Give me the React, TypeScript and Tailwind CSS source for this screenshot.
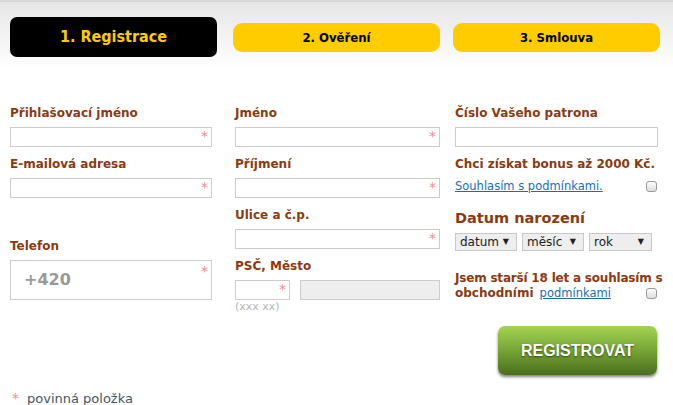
import React from "react";

const label = "block h-4 text-[12px] leading-4 font-bold text-[#8b3a10]";

function Star({ top = "top-[2px]" }: { top?: string }) {
  return (
    <span className={`absolute right-[3px] ${top} text-[14px] leading-3 font-normal text-[#f48b8b]`}>*</span>
  );
}

function Field({
  title,
  required = true,
  className = "",
}: {
  title: string;
  required?: boolean;
  className?: string;
}) {
  return (
    <div className={className}>
      <span className={label}>{title}</span>
      <div className="relative mt-[6px] h-5 border border-[#cccccc] bg-white">
        {required ? <Star /> : null}
      </div>
    </div>
  );
}

function Check() {
  return (
    <span className="inline-block h-[11px] w-[11px] rounded-[3px] border border-[#9a9a9a] bg-gradient-to-b from-white to-[#dcdcdc]" />
  );
}

function Select({ text, width }: { text: string; width: string }) {
  return (
    <div
      className={`flex h-[18px] ${width} items-center justify-between border border-[#c8c8c8] bg-[#eeeeee] pl-[4px] pr-[7px] text-[12px] text-[#222]`}
    >
      <span>{text}</span>
      <span className="text-[8px]">▼</span>
    </div>
  );
}

export default function App() {
  return (
    <div
      className="relative h-[405px] w-[673px] overflow-hidden bg-white"
      style={{ fontFamily: '"DejaVu Sans", Verdana, sans-serif' }}
    >
      <div className="h-[70px] border-t-2 border-[#d6d6d6] bg-gradient-to-b from-[#e6e6e6] to-white">
        <div className="flex items-start pl-[10px] pt-[15px]">
          <div
            className="flex h-10 w-[207px] items-center justify-center rounded-[7px] bg-black text-[16px] font-bold text-[#ffcc00]"
            style={{ fontFamily: '"DejaVu Sans Condensed", "DejaVu Sans", sans-serif' }}
          >
            1. Registrace
          </div>
          <div
            className="ml-[16px] mt-[6px] flex h-[29px] w-[207px] items-center justify-center rounded-[9px] bg-[#ffcc00] text-[13px] font-bold text-black"
            style={{ fontFamily: '"DejaVu Sans Condensed", "DejaVu Sans", sans-serif' }}
          >
            2. Ověření
          </div>
          <div
            className="ml-[13px] mt-[6px] flex h-[29px] w-[207px] items-center justify-center rounded-[9px] bg-[#ffcc00] text-[13px] font-bold text-black"
            style={{ fontFamily: '"DejaVu Sans Condensed", "DejaVu Sans", sans-serif' }}
          >
            3. Smlouva
          </div>
        </div>
      </div>

      <div className="mt-[35px] flex pl-[10px]">
        <div className="w-[202px]">
          <Field title="Přihlašovací jméno" />
          <Field title="E-mailová adresa" className="mt-[9px]" />
          <span className={`${label} mt-[40px]`}>Telefon</span>
          <div className="relative mt-[6px] flex h-[40px] items-center border border-[#cccccc] bg-white pl-[13px] text-[16px] font-bold text-[#999999]">
            +420
            <Star top="top-[4px]" />
          </div>
        </div>

        <div className="ml-[23px] w-[205px]">
          <Field title="Jméno" />
          <Field title="Příjmení" className="mt-[9px]" />
          <Field title="Ulice a č.p." className="mt-[9px]" />
          <span className={`${label} mt-[9px]`}>PSČ, Město</span>
          <div className="mt-[6px] flex gap-[10px]">
            <div className="relative h-5 w-[55px] border border-[#cccccc] bg-white">
              <Star />
            </div>
            <div className="h-5 flex-1 border border-[#cccccc] bg-[#eeeeee]" />
          </div>
          <span className="block text-[11px] leading-[14px] text-[#b5b5b5]">(xxx xx)</span>
        </div>

        <div className="ml-[15px] w-[203px]">
          <Field title="Číslo Vašeho patrona" required={false} />
          <span className={`${label} mt-[9px]`}>Chci získat bonus až 2000 Kč.</span>
          <div className="mt-[6px] flex items-center justify-between pr-[1px]">
            <span className="text-[11.5px] leading-4 text-[#1a6ead] underline">Souhlasím s podmínkami.</span>
            <Check />
          </div>
          <span className="mt-[16px] block text-[14.5px] leading-4 font-bold text-[#8b3a10]">Datum narození</span>
          <div className="mt-[7px] flex gap-[5px]">
            <Select text="datum" width="w-[62px]" />
            <Select text="měsíc" width="w-[62px]" />
            <Select text="rok" width="w-[63px]" />
          </div>
          <div className="mt-[20px] whitespace-nowrap text-[12px] leading-[15px] font-bold tracking-[-0.2px] text-[#8b3a10]">
            Jsem starší 18 let a souhlasím s
          </div>
          <div className="flex items-center justify-between pr-[1px] text-[12px] leading-[15px]">
            <span>
              <span className="font-bold text-[#8b3a10]">obchodními</span>
              <span className="ml-[6px] text-[11.5px] text-[#1a6ead] underline">podmínkami</span>
            </span>
            <Check />
          </div>
          <div className="mt-[25px] flex justify-end pr-[1px]">
            <div
              className="flex h-[49px] w-[159px] items-center justify-center rounded-[7px] bg-gradient-to-b from-[#a6d455] via-[#76a534] to-[#4b6e1e] text-[16px] font-bold text-white shadow-[0_2px_3px_rgba(0,0,0,0.5)]"
              style={{ fontFamily: '"Liberation Sans", Arial, sans-serif', textShadow: "0 1px 2px #2d4410" }}
            >
              REGISTROVAT
            </div>
          </div>
        </div>
      </div>

      <div className="absolute left-[12px] top-[388px] flex items-center text-[13px] text-[#445566]">
        <span className="text-[14px] text-[#f48b8b]">*</span>
        <span className="ml-[8px]">povinná položka</span>
      </div>
    </div>
  );
}
